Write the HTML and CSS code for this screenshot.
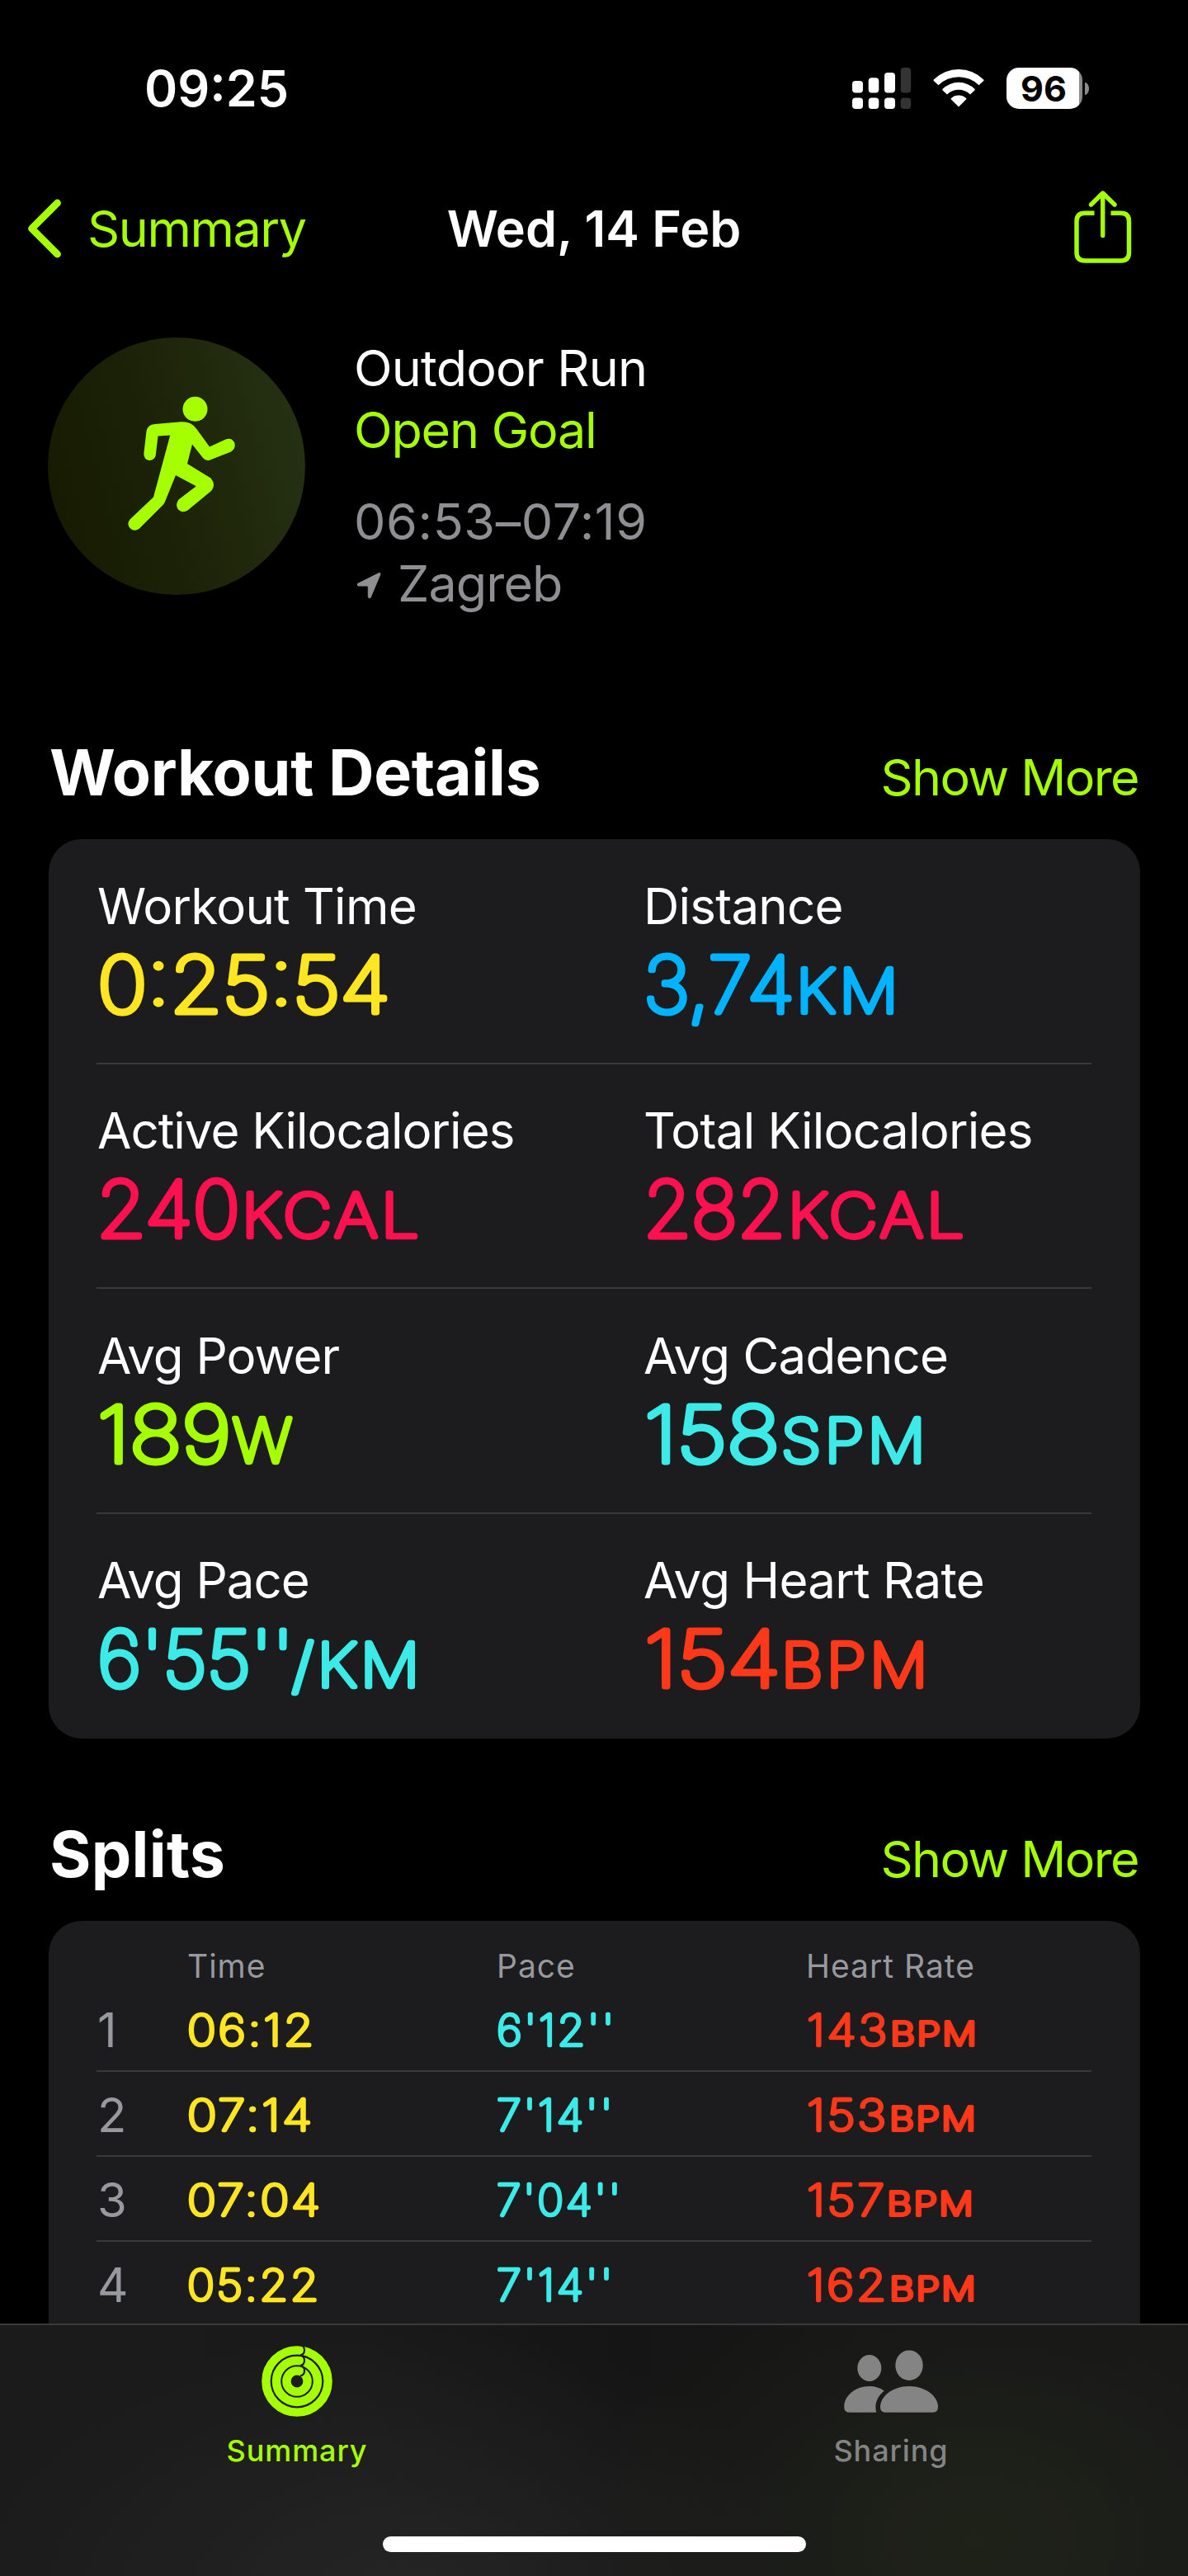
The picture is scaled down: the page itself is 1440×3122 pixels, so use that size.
FILE: index.html
```html
<!doctype html>
<html lang="en">
<head>
    <meta charset="UTF-8">
    <meta name="viewport" content="width=device-width, initial-scale=1.0">
    <title>Workout</title>
    <link rel="stylesheet" href="styles.css">
</head>
<body>
<div class="status">
    <div class="clock">09:25</div>
    <svg class="signal" width="72" height="50" viewBox="0 0 72 50">
        <g fill="#fff">
            <rect x="0" y="16" width="13" height="14.5" rx="4"/>
            <rect x="19.7" y="12.3" width="12.6" height="18.2" rx="4"/>
            <rect x="39" y="6" width="13" height="24.5" rx="4"/>
            <rect x="0" y="36.5" width="13" height="13.5" rx="4"/>
            <rect x="19.7" y="36.5" width="12.6" height="13.5" rx="4"/>
            <rect x="39" y="36.5" width="13" height="13.5" rx="4"/>
        </g>
        <g fill="#333">
            <rect x="58.7" y="0" width="12.5" height="30.5" rx="4"/>
            <rect x="58.7" y="36.5" width="12.5" height="13.5" rx="4"/>
        </g>
    </svg>
    <svg class="wifi" width="62" height="46" viewBox="0 0 62 46" fill="#fff">
        <path d="M6.5 19.2 L0.8 14 Q0 13.2 0.8 12.4 A43 43 0 0 1 61.2 12.4 Q62 13.2 61.2 14 L55.5 19.2 A35 35 0 0 0 6.5 19.2 Z"/>
        <path d="M17 30.4 L11.6 25.4 Q10.8 24.6 11.6 23.8 A27.6 27.6 0 0 1 50.4 23.8 Q51.2 24.6 50.4 25.4 L45 30.4 A20 20 0 0 0 17 30.4 Z"/>
        <path d="M31 45.6 L21.9 36.4 Q21.2 35.6 22 34.9 A13.5 13.5 0 0 1 40 34.9 Q40.8 35.6 40.1 36.4 Z"/>
    </svg>
    <div class="battery">
        <div class="level">96</div>
        <div class="cap"></div>
    </div>
</div>

<div class="nav">
    <a class="back">
        <svg width="42" height="72" viewBox="0 0 42 72">
            <path d="M36.5 5 L5.5 36 L36.5 67" fill="none" stroke="#a6ff00" stroke-width="8.8" stroke-linecap="round" stroke-linejoin="round"/>
        </svg>
        <span>Summary</span>
    </a>
    <div class="title">Wed, 14 Feb</div>
    <svg class="share" width="70" height="90" viewBox="0 0 70 90" fill="none" stroke="#a6ff00" stroke-width="5.4">
        <path d="M24.5 28.2 H13 Q3 28.2 3 38.2 V76 Q3 86 13 86 H56.5 Q66.5 86 66.5 76 V38.2 Q66.5 28.2 56.5 28.2 H44.5"/>
        <path d="M34.7 55.5 V5 M20.5 18 L34.7 4 L49 18" stroke-linecap="round" stroke-linejoin="round"/>
    </svg>
</div>

<div class="hero">
    <div class="badge">
        <svg width="312" height="312" viewBox="58.5 409 312 312" fill="#a6ff00">
            <circle cx="237" cy="495.8" r="15"/>
            <path d="M188 514 L220 511.3 Q232 510.5 238.5 519.5 L254.5 541.5 L274 532.5 Q281 530 284.5 536 Q287 543 280.5 547.5 L255 557.5 Q250.5 559.5 246.5 555 L233.5 538.5 L227.5 562 L256 579.5 Q262.5 587 257 594.5 L228 618.5 Q222 622.5 216.5 617.5 Q212.5 612 217 605.5 L238.3 589.2 L213.5 576 L200.5 608 Q199.5 611 196.5 613.5 L169.5 640.5 Q163.5 645 158.5 640.5 Q153.5 635 158 629.5 L186.5 602.5 L206.7 527.5 L192 528.5 L189.3 551.5 Q188 558 181.5 558 Q175 557 174.8 550 L178 522.5 Q179.5 514.5 188 514 Z"/>
        </svg>
    </div>
    <div class="info">
        <div class="kind">Outdoor Run</div>
        <div class="goal">Open Goal</div>
        <div class="when">06:53–07:19</div>
        <div class="place">
            <svg width="30" height="34" viewBox="0 0 30 34">
                <path d="M27.5 1.5 L1.5 14.5 Q0.5 16.5 2.5 17 H13 Q14.3 17 14.3 18.5 V30.5 Q15 32.5 17 31.5 L29 3 Q29.2 1 27.5 1.5 Z" fill="#8e8e93" stroke="#8e8e93"/>
            </svg>
            <span>Zagreb</span>
        </div>
    </div>
</div>

<div class="head">
    <h2>Workout Details</h2>
    <a class="more">Show More</a>
</div>
<div class="card details">
    <div class="row">
        <div class="cell">
            <div class="label">Workout Time</div>
            <svg class="value yellow"><text x="0" y="93" textLength="355" lengthAdjust="spacingAndGlyphs">0:25:54</text></svg>
        </div>
        <div class="cell">
            <div class="label">Distance</div>
            <svg class="value blue"><text x="0" y="93" textLength="183" lengthAdjust="spacingAndGlyphs">3,74</text><text class="unit" x="185" y="93" textLength="128" lengthAdjust="spacingAndGlyphs">KM</text></svg>
        </div>
    </div>
    <div class="row">
        <div class="cell">
            <div class="label wide">Active Kilocalories</div>
            <svg class="value pink"><text x="-1" y="93" textLength="174" lengthAdjust="spacingAndGlyphs">240</text><text class="unit" x="175" y="93" textLength="219" lengthAdjust="spacingAndGlyphs">KCAL</text></svg>
        </div>
        <div class="cell">
            <div class="label">Total Kilocalories</div>
            <svg class="value pink"><text x="0" y="93" textLength="172" lengthAdjust="spacingAndGlyphs">282</text><text class="unit" x="175" y="93" textLength="218" lengthAdjust="spacingAndGlyphs">KCAL</text></svg>
        </div>
    </div>
    <div class="row">
        <div class="cell">
            <div class="label wide">Avg Power</div>
            <svg class="value green"><text x="0" y="93" textLength="162" lengthAdjust="spacingAndGlyphs">189</text><text class="unit" x="164" y="93" textLength="76" lengthAdjust="spacingAndGlyphs">W</text></svg>
        </div>
        <div class="cell">
            <div class="label">Avg Cadence</div>
            <svg class="value cyan"><text x="1" y="93" textLength="164" lengthAdjust="spacingAndGlyphs">158</text><text class="unit" x="167" y="93" textLength="179" lengthAdjust="spacingAndGlyphs">SPM</text></svg>
        </div>
    </div>
    <div class="row">
        <div class="cell">
            <div class="label wide">Avg Pace</div>
            <svg class="value cyan"><text x="0" y="93" textLength="238" lengthAdjust="spacingAndGlyphs">6'55''</text><text class="unit" x="236" y="93" textLength="159" lengthAdjust="spacingAndGlyphs">/KM</text></svg>
        </div>
        <div class="cell">
            <div class="label">Avg Heart Rate</div>
            <svg class="value red"><text x="1" y="93" textLength="165" lengthAdjust="spacingAndGlyphs">154</text><text class="unit" x="167" y="93" textLength="182" lengthAdjust="spacingAndGlyphs">BPM</text></svg>
        </div>
    </div>
</div>

<div class="head splits-head">
    <h2>Splits</h2>
    <a class="more">Show More</a>
</div>
<div class="card splits">
    <div class="split names">
        <div></div>
        <div>Time</div>
        <div>Pace</div>
        <div>Heart Rate</div>
    </div>
    <div class="split">
        <div class="num">1</div>
        <svg class="yellow"><text x="0" y="71" textLength="156" lengthAdjust="spacingAndGlyphs">06:12</text></svg>
        <svg class="cyan"><text x="0" y="71" textLength="145" lengthAdjust="spacingAndGlyphs">6'12''</text></svg>
        <svg class="red"><text x="1" y="71" textLength="100" lengthAdjust="spacingAndGlyphs">143</text><text class="unit" x="102" y="71" textLength="107" lengthAdjust="spacingAndGlyphs">BPM</text></svg>
    </div>
    <div class="split">
        <div class="num">2</div>
        <svg class="yellow"><text x="0" y="71" textLength="154" lengthAdjust="spacingAndGlyphs">07:14</text></svg>
        <svg class="cyan"><text x="0" y="71" textLength="143" lengthAdjust="spacingAndGlyphs">7'14''</text></svg>
        <svg class="red"><text x="1" y="71" textLength="99" lengthAdjust="spacingAndGlyphs">153</text><text class="unit" x="101" y="71" textLength="107" lengthAdjust="spacingAndGlyphs">BPM</text></svg>
    </div>
    <div class="split">
        <div class="num">3</div>
        <svg class="yellow"><text x="0" y="71" textLength="164" lengthAdjust="spacingAndGlyphs">07:04</text></svg>
        <svg class="cyan"><text x="0" y="71" textLength="153" lengthAdjust="spacingAndGlyphs">7'04''</text></svg>
        <svg class="red"><text x="1" y="71" textLength="97" lengthAdjust="spacingAndGlyphs">157</text><text class="unit" x="98" y="71" textLength="107" lengthAdjust="spacingAndGlyphs">BPM</text></svg>
    </div>
    <div class="split">
        <div class="num">4</div>
        <svg class="yellow"><text x="0" y="71" textLength="162" lengthAdjust="spacingAndGlyphs">05:22</text></svg>
        <svg class="cyan"><text x="0" y="71" textLength="143" lengthAdjust="spacingAndGlyphs">7'14''</text></svg>
        <svg class="red"><text x="1" y="71" textLength="99" lengthAdjust="spacingAndGlyphs">162</text><text class="unit" x="101" y="71" textLength="107" lengthAdjust="spacingAndGlyphs">BPM</text></svg>
    </div>
</div>

<div class="tabbar">
    <div class="tabs">
        <a class="tab active">
            <svg width="86" height="86" viewBox="-43 -43 86 86" fill="none">
                <g stroke="#a6ff00" stroke-width="10.4">
                    <circle r="37.6"/>
                    <circle r="25"/>
                    <circle r="12.6"/>
                </g>
                <!-- round ring ends -->
                <g stroke="#1b1b1b" stroke-width="2.2">
                    <path d="M4 -44 A6.4 6.4 0 0 1 4 -31.5"/>
                    <path d="M4 -31.5 A6.4 6.4 0 0 1 4 -19"/>
                    <path d="M4 -19 A6.4 6.4 0 0 1 4 -6.5"/>
                </g>
            </svg>
            <span>Summary</span>
        </a>
        <a class="tab">
            <svg width="114" height="86" viewBox="1023 2843 114 86" fill="#848484">
                <ellipse cx="1053.8" cy="2870" rx="14.5" ry="16"/>
                <ellipse cx="1102" cy="2866.7" rx="16.7" ry="18.3"/>
                <path d="M1029 2923.7 Q1023.2 2923.7 1023.2 2917 C1023.2 2904 1036 2892 1053.8 2892 Q1064 2892 1071.7 2897.5 C1062 2906 1060 2914 1062.2 2923.7 Z"/>
                <path d="M1073 2923.7 Q1067 2923.7 1067 2917 C1067 2905 1081 2892 1102 2892 C1123 2892 1137 2905 1137 2917 Q1137 2923.7 1131 2923.7 Z"/>
            </svg>
            <span>Sharing</span>
        </a>
    </div>
    <div class="home"></div>
</div>
</body>
</html>
```
FILE: styles.css
```css
html, body {
    margin: 0;
    padding: 0;
    height: 3122px;
    overflow: hidden;
}

body {
    background: #000;
    color: #fff;
    font-family: Inter, "Liberation Sans", sans-serif;
    font-size: 61px;
}

svg {
    display: block;
    flex: none;
}

/* status bar */
.status {
    height: 214px;
    display: flex;
    align-items: center;
    padding: 0 120px 0 175px;
    box-sizing: border-box;
}

.clock {
    flex: 1;
    font-weight: 600;
    line-height: 61px;
}

.wifi {
    margin: 0 27px 0 26px;
}

.battery {
    display: flex;
    align-items: center;
    gap: 3px;
}

.level {
    width: 92px;
    height: 50px;
    border-radius: 15px;
    background: linear-gradient(90deg, #fff 88.5px, #8c8c8c 88.5px);
    color: #000;
    font-size: 43px;
    font-weight: 700;
    line-height: 51px;
    text-indent: 17px;
}

.cap {
    width: 5px;
    height: 15px;
    border-radius: 0 5px 5px 0 / 0 7.5px 7.5px 0;
    background: #8c8c8c;
}

/* nav */
.nav {
    height: 126px;
    display: grid;
    grid-template-columns: 1fr auto 1fr;
    align-items: center;
    padding: 0 68px;
    line-height: 72px;
}

.back {
    display: flex;
    align-items: center;
    gap: 31px;
    margin-left: -35px;
    color: #a6ff00;
    letter-spacing: -1.4px;
}

.title {
    font-weight: 600;
}

.share {
    justify-self: end;
    margin-top: -4px;
}

/* workout header */
.hero {
    display: flex;
    gap: 59px;
    height: 336px;
    margin: 69px 58px 145.4px;
}

.badge {
    flex: none;
    width: 312px;
    height: 312px;
    border-radius: 50%;
    background: linear-gradient(75deg, #161b02 10%, #1c2208 45%, #263213 95%);
}

.info {
    line-height: 75px;
}

.kind {
    letter-spacing: -.8px;
}

.goal {
    color: #a6ff00;
    letter-spacing: -1.2px;
}

.when {
    margin-top: 36px;
    color: #8e8e93;
    letter-spacing: .6px;
}

.place {
    display: flex;
    align-items: center;
    gap: 20px;
    padding-left: 3px;
    color: #8e8e93;
    letter-spacing: -.9px;
}

.place svg {
    margin-top: 4px;
}

/* sections */
.head {
    display: flex;
    justify-content: space-between;
    align-items: baseline;
    height: 92px;
    margin: 0 60px 35px;
    line-height: 92px;
}

.head h2 {
    margin: 0;
    font-size: 77px;
    font-weight: 700;
    letter-spacing: -.3px;
}

.more {
    color: #a6ff00;
    letter-spacing: -1.6px;
}

.card {
    margin: 0 58.5px;
    padding: 0 58.5px;
    background: #1c1c1e;
    border-radius: 40px;
}

.yellow {
    fill: #ffe620;
    stroke: #ffe620;
}

.blue {
    fill: #00b3ff;
    stroke: #00b3ff;
}

.pink {
    fill: #ff104f;
    stroke: #ff104f;
}

.green {
    fill: #a6ff00;
    stroke: #a6ff00;
}

.cyan {
    fill: #3cebe8;
    stroke: #3cebe8;
}

.red {
    fill: #ff3819;
    stroke: #ff3819;
}

/* workout details */
.row {
    display: grid;
    grid-template-columns: 662px 1fr;
    height: 272.4px;
    padding-left: 1px;
    box-sizing: border-box;
    border-bottom: 2px solid #39393c;
}

.row:last-child {
    border-bottom: none;
}

.label {
    padding-top: 44.5px;
    font-size: 60px;
    line-height: 72px;
    letter-spacing: -.75px;
}

.wide {
    letter-spacing: -1px;
}

.value {
    width: 500px;
    height: 120px;
    overflow: visible;
    font-size: 94px;
    font-weight: 100;
    stroke-width: 7px;
    stroke-linejoin: round;
}

.value .unit {
    font-size: 72px;
    letter-spacing: 4px;
    stroke-width: 6.5px;
}

/* splits */
.splits-head {
    margin-top: 94.5px;
}

.splits-head h2 {
    letter-spacing: .3px;
}

.splits {
    padding-top: 29px;
    padding-bottom: 100px;
}

.split {
    display: grid;
    grid-template-columns: 109px 375px 375px 1fr;
    height: 102.7px;
    padding-left: 1px;
    box-sizing: border-box;
    border-bottom: 2px solid #39393c;
}

.names {
    height: 51px;
    border-bottom: none;
    color: #98989f;
    font-size: 39px;
    line-height: 51px;
    letter-spacing: 1px;
}

.num {
    color: #98989f;
    font-size: 58px;
    line-height: 105px;
}

.split svg {
    width: 230px;
    height: 100px;
    overflow: visible;
    font-size: 52px;
    font-weight: 100;
    letter-spacing: 2.5px;
    stroke-width: 4.4px;
    stroke-linejoin: round;
}

.split .unit {
    font-size: 39px;
    font-weight: 200;
    letter-spacing: 2px;
    stroke-width: 4px;
}

/* bottom bar */
.tabbar {
    position: fixed;
    left: 0;
    right: 0;
    bottom: 0;
    height: 306px;
    box-sizing: border-box;
    border-top: 2px solid #3a3a3a;
    background: radial-gradient(ellipse 520px 330px at 34% 110%, #252525, rgba(37, 37, 37, 0)),
        radial-gradient(ellipse 480px 340px at 82% 85%, #1f2219, rgba(31, 34, 25, 0)),
        linear-gradient(90deg, #1b1b1b 0%, #1a1a1a 30%, #151515 52%, #181818 100%);
}

.tabs {
    display: flex;
}

.tab {
    flex: 1;
    display: flex;
    flex-direction: column;
    align-items: center;
    padding-top: 25px;
    color: #848484;
    font-size: 36px;
    font-weight: 500;
    line-height: 44px;
    letter-spacing: .9px;
}

.tab span {
    margin-top: 19px;
}

.active {
    color: #a6ff00;
}

.home {
    width: 513px;
    height: 19px;
    margin: 82px auto 0;
    border-radius: 10px;
    background: #fff;
}
```
